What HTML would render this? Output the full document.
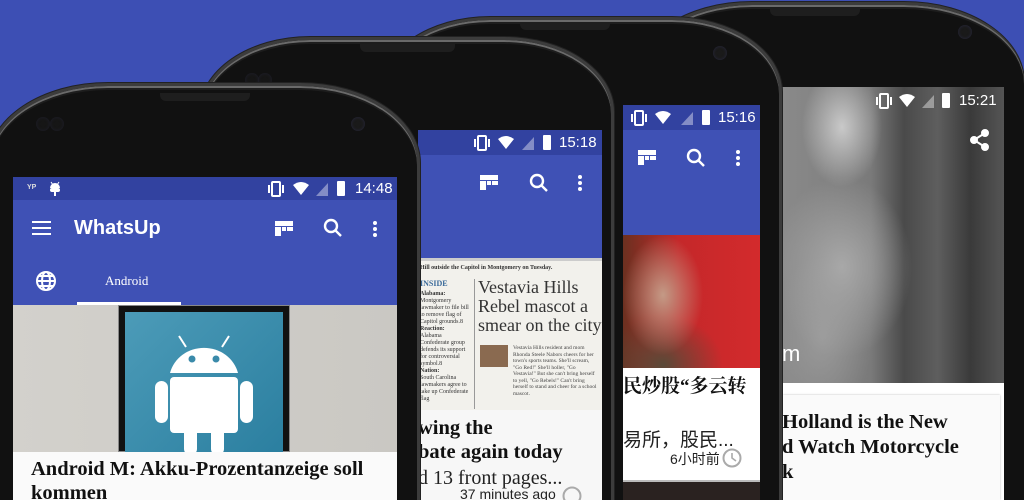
<!DOCTYPE html>
<html><head><meta charset="utf-8"><style>
*{margin:0;padding:0;box-sizing:border-box}
html,body{width:1024px;height:500px;overflow:hidden}
body{font-family:"Liberation Sans","Noto Sans CJK SC",sans-serif}
#root{position:relative;width:1024px;height:500px;overflow:hidden;background:#3d4fb4}
.g{position:absolute;left:0;top:0}
.a{position:absolute}
.body{position:absolute;background:#111;border:3px solid #3c3c3c;border-bottom:none;box-shadow:inset 0 2px 0 #6a6a6a,inset 0 4px 0 #1d1d1d,0 0 0 1px #222}
.grill{position:absolute;height:8px;background:#1e1e1e;border-radius:0 0 6px 6px}
.cam{position:absolute;width:14px;height:14px;border-radius:50%;background:#1a1a1a;box-shadow:inset 0 0 3px #2a2a40}
.scr{position:absolute;overflow:hidden}
.sb{position:absolute;left:0;right:0;background:#3242a0}
.tb{position:absolute;left:0;right:0;background:#3f51b5}
.t{position:absolute;white-space:nowrap;color:#fff}
.sf{font-family:"Liberation Serif","Noto Serif CJK SC",serif;color:#111;font-weight:bold;font-size:20.5px}
</style></head><body><div id="root">

<!-- PHONE 4 (back) -->
<div class="g">
 <div class="body" style="left:632px;top:2px;width:392px;height:498px;border-radius:120px 120px 0 0/80px 80px 0 0;border-right:none"></div>
 <div class="grill" style="left:770px;top:8px;width:90px"></div>
 <div class="cam" style="left:958px;top:25px"></div>
 <div class="scr" style="left:782px;top:87px;width:222px;height:413px;background:#fff">
  <div class="a" style="left:0;top:0;width:222px;height:296px;background:
   radial-gradient(ellipse 40px 60px at 60px 40px,#c9c9c9,transparent),
   radial-gradient(ellipse 70px 90px at 60px 180px,#a8a8a8,transparent),
   radial-gradient(ellipse 50px 80px at 40px 250px,#9a9a9a,transparent),
   linear-gradient(90deg,#8a8a8a 0,#7a7a7a 40%,#4a4a4a 55%,#5e5e5e 70%,#3a3a3a 85%,#555 100%)"></div>
  <div class="t" style="left:0;top:254px;font-size:22px">m</div>
  <svg class="a" style="left:94px;top:5px" width="120" height="20" viewBox="0 0 120 20" fill="#fff">
   <rect x="4" y="2" width="8" height="14" rx="1" fill="none" stroke="#fff" stroke-width="2"/><rect x="0" y="5" width="2" height="8"/><rect x="14" y="5" width="2" height="8"/>
   <path d="M23 5 Q31 -1 39 5 L31 15 Z"/>
   <path d="M46 16 L58 3 L58 16 Z" opacity=".4"/>
   <rect x="66" y="1" width="8" height="15" rx="1"/>
  </svg>
  <div class="t" style="left:177px;top:5px;font-size:15px">15:21</div>
  <svg class="a" style="left:188px;top:42px" width="20" height="22" viewBox="0 0 20 22" fill="#fff" stroke="#fff" stroke-width="2"><circle cx="15" cy="4" r="3"/><circle cx="4" cy="11" r="3"/><circle cx="15" cy="18" r="3"/><path d="M15 4 L4 11 L15 18" fill="none"/></svg>
  <div class="a" style="left:1px;top:308px;width:217px;height:105px;background:#fafafa;box-shadow:0 0 2px #bbb"></div>
  <div class="t sf" style="left:0;top:324px">Holland is the New</div>
  <div class="t sf" style="left:0;top:349px">d Watch Motorcycle</div>
  <div class="t sf" style="left:0;top:374px">k</div>
 </div>
</div>

<!-- PHONE 3 -->
<div class="g">
 <div class="body" style="left:380px;top:17px;width:402px;height:483px;border-radius:110px 110px 0 0/75px 75px 0 0"></div>
 <div class="grill" style="left:520px;top:22px;width:90px"></div>
 <div class="cam" style="left:713px;top:46px"></div>
 <div class="scr" style="left:623px;top:105px;width:137px;height:395px;background:#fff">
  <div class="sb" style="top:0;height:25px"></div>
  <div class="tb" style="top:25px;height:105px"></div>
  <svg class="a" style="left:8px;top:5px" width="80" height="16" viewBox="0 0 80 16" fill="#fff">
   <rect x="4" y="1" width="8" height="14" rx="1" fill="none" stroke="#fff" stroke-width="2"/><rect x="0" y="4" width="2" height="8"/><rect x="14" y="4" width="2" height="8"/>
   <path d="M24 4 Q32 -2 40 4 L32 14 Z"/>
   <path d="M50 15 L62 2 L62 15 Z" opacity=".4"/>
   <rect x="71" y="0" width="8" height="15" rx="1"/>
  </svg>
  <div class="t" style="left:95px;top:4px;font-size:15px">15:16</div>
  <svg class="a" style="left:15px;top:45px" width="18" height="15" viewBox="0 0 18 15" fill="#fff"><rect x="0" y="0" width="18" height="5"/><rect x="0" y="6" width="6" height="9"/><rect x="7" y="6" width="4" height="4"/><rect x="12" y="6" width="6" height="4"/></svg>
  <svg class="a" style="left:63px;top:43px" width="20" height="20" viewBox="0 0 20 20" fill="none" stroke="#fff" stroke-width="2.4"><circle cx="8" cy="8" r="6"/><path d="M12 12 L18 18"/></svg>
  <svg class="a" style="left:112px;top:44px" width="6" height="18" fill="#fff"><circle cx="3" cy="3" r="2"/><circle cx="3" cy="9" r="2"/><circle cx="3" cy="15" r="2"/></svg>
  <div class="a" style="left:0;top:130px;width:137px;height:133px;background:
   radial-gradient(ellipse 40px 60px at 40px 60px,#c49a86,transparent),
   radial-gradient(ellipse 60px 50px at 40px 130px,#5a4a38,transparent),
   linear-gradient(90deg,#6b3020 0,#c4282a 40%,#d32a2c 100%)"></div>
  <div class="t sf" style="left:0;top:266px;font-size:19px">民炒股“多云转</div>
  <div class="t" style="left:0;top:320px;font-size:19px;color:#222">易所，股民...</div>
  <div class="t" style="left:47px;top:344px;font-size:14px;color:#222">6小时前</div>
  <svg class="a" style="left:99px;top:343px" width="20" height="20"><circle cx="10" cy="10" r="8.5" fill="none" stroke="#aaa" stroke-width="2"/><path d="M10 5 V10 L14 13" fill="none" stroke="#aaa" stroke-width="1.6"/></svg>
  <div class="a" style="left:0;top:375px;width:137px;height:20px;background:#2a2220;border-top:2px solid #bbb"></div>
 </div>
</div>

<!-- PHONE 2 -->
<div class="g">
 <div class="body" style="left:200px;top:37px;width:414px;height:463px;border-radius:110px 110px 0 0/75px 75px 0 0"></div>
 <div class="grill" style="left:360px;top:44px;width:95px"></div>
 <div class="cam" style="left:245px;top:73px;opacity:.6"></div><div class="cam" style="left:258px;top:73px;opacity:.6"></div>
 <div class="scr" style="left:418px;top:130px;width:184px;height:370px;background:#f7f7f7">
  <div class="sb" style="top:0;height:25px"></div>
  <div class="tb" style="top:25px;height:103px"></div>
  <svg class="a" style="left:56px;top:5px" width="80" height="16" viewBox="0 0 80 16" fill="#fff">
   <rect x="4" y="1" width="8" height="14" rx="1" fill="none" stroke="#fff" stroke-width="2"/><rect x="0" y="4" width="2" height="8"/><rect x="14" y="4" width="2" height="8"/>
   <path d="M24 4 Q32 -2 40 4 L32 14 Z"/>
   <path d="M48 15 L60 2 L60 15 Z" opacity=".4"/>
   <rect x="69" y="0" width="8" height="15" rx="1"/>
  </svg>
  <div class="t" style="left:141px;top:4px;font-size:15px">15:18</div>
  <svg class="a" style="left:62px;top:45px" width="18" height="15" viewBox="0 0 18 15" fill="#fff"><rect x="0" y="0" width="18" height="5"/><rect x="0" y="6" width="6" height="9"/><rect x="7" y="6" width="4" height="4"/><rect x="12" y="6" width="6" height="4"/></svg>
  <svg class="a" style="left:111px;top:43px" width="20" height="20" viewBox="0 0 20 20" fill="none" stroke="#fff" stroke-width="2.4"><circle cx="8" cy="8" r="6"/><path d="M12 12 L18 18"/></svg>
  <svg class="a" style="left:159px;top:44px" width="6" height="18" fill="#fff"><circle cx="3" cy="3" r="2"/><circle cx="3" cy="9" r="2"/><circle cx="3" cy="15" r="2"/></svg>
  <div class="a" style="left:0;top:128px;width:184px;height:152px;background:#f2f1ec;border-top:3px solid #ccc;font-family:'Liberation Serif',serif;color:#222;overflow:hidden">
   <div class="t" style="left:2px;top:4px;font-size:6px;color:#333;font-weight:bold">Hill outside the Capitol in Montgomery on Tuesday.</div>
   <div class="t" style="left:2px;top:18px;font-size:8px;color:#3a6a9a;font-weight:bold">INSIDE</div>
   <div class="a" style="left:2px;top:30px;width:50px;font-size:6px;line-height:7px;color:#333"><b>Alabama:</b><br>Montgomery lawmaker to file bill to remove flag of Capitol grounds.8<br><b>Reaction:</b><br>Alabama Confederate group defends its support for controversial symbol.8<br><b>Nation:</b><br>South Carolina lawmakers agree to take up Confederate flag</div>
   <div class="a" style="left:56px;top:18px;width:1px;height:130px;background:#999"></div>
   <div class="a" style="left:60px;top:17px;font-size:18px;line-height:19px;color:#333;white-space:nowrap">Vestavia Hills<br>Rebel mascot a<br>smear on the city</div>
   <div class="a" style="left:62px;top:84px;width:28px;height:22px;background:#8a6a50"></div>
   <div class="a" style="left:95px;top:84px;width:85px;font-size:5.5px;line-height:6.5px;color:#444">Vestavia Hills resident and mom Rhonda Steele Nabors cheers for her town's sports teams. She'll scream, "Go Red!" She'll holler, "Go Vestavia!" But she can't bring herself to yell, "Go Rebels!" Can't bring herself to stand and cheer for a school mascot.</div>
  </div>
  <div class="t sf" style="left:0;top:287px">wing the</div>
  <div class="t sf" style="left:0;top:311px">bate again today</div>
  <div class="t" style="left:0;top:337px;font-size:20px;color:#222;font-family:'Liberation Serif',serif">d 13 front pages...</div>
  <div class="t" style="left:42px;top:356px;font-size:14px;color:#222">37 minutes ago</div>
  <svg class="a" style="left:144px;top:356px" width="20" height="14"><circle cx="10" cy="10" r="8.5" fill="none" stroke="#aaa" stroke-width="2"/></svg>
 </div>
</div>

<!-- PHONE 1 (front) -->
<div class="g">
 <div class="body" style="left:-12px;top:83px;width:432px;height:417px;border-radius:120px 120px 0 0/80px 80px 0 0"></div>
 <div class="grill" style="left:160px;top:93px;width:90px"></div>
 <div class="cam" style="left:36px;top:117px;opacity:.6"></div><div class="cam" style="left:50px;top:117px;opacity:.6"></div>
 <div class="cam" style="left:351px;top:117px"></div>
 <div class="scr" style="left:13px;top:177px;width:384px;height:323px;background:#fafafa">
  <div class="sb" style="top:0;height:23px"></div>
  <div class="tb" style="top:23px;height:105px"></div>
  <div class="t" style="left:14px;top:7px;font-size:7px;font-weight:bold;color:#ddd">YP</div>
  <svg class="a" style="left:35px;top:3px" width="14" height="16" viewBox="0 0 14 16" fill="#fff"><path d="M2 8 A5 5 0 0 1 12 8 Z"/><rect x="2" y="8" width="10" height="4" rx="2"/><rect x="6" y="11" width="2" height="5"/><path d="M3 2 L5 5 M11 2 L9 5" stroke="#fff"/></svg>
  <svg class="a" style="left:255px;top:4px" width="80" height="16" viewBox="0 0 80 16" fill="#fff">
   <rect x="4" y="1" width="8" height="14" rx="1" fill="none" stroke="#fff" stroke-width="2"/><rect x="0" y="4" width="2" height="8"/><rect x="14" y="4" width="2" height="8"/>
   <path d="M25 4 Q33 -2 41 4 L33 14 Z"/>
   <path d="M48 15 L60 2 L60 15 Z" opacity=".4"/>
   <rect x="69" y="0" width="8" height="15" rx="1"/>
  </svg>
  <div class="t" style="left:342px;top:3px;font-size:15px">14:48</div>
  <svg class="a" style="left:19px;top:44px" width="19" height="14" fill="#fff"><rect y="0" width="19" height="2"/><rect y="6" width="19" height="2"/><rect y="12" width="19" height="2"/></svg>
  <div class="t" style="left:61px;top:40px;font-size:20px;font-weight:bold">WhatsUp</div>
  <svg class="a" style="left:262px;top:44px" width="18" height="15" viewBox="0 0 18 15" fill="#fff"><rect x="0" y="0" width="18" height="5"/><rect x="0" y="6" width="6" height="9"/><rect x="7" y="6" width="4" height="4"/><rect x="12" y="6" width="6" height="4"/></svg>
  <svg class="a" style="left:310px;top:41px" width="20" height="20" viewBox="0 0 20 20" fill="none" stroke="#fff" stroke-width="2.4"><circle cx="8" cy="8" r="6"/><path d="M12 12 L18 18"/></svg>
  <svg class="a" style="left:359px;top:43px" width="6" height="18" fill="#fff"><circle cx="3" cy="3" r="2"/><circle cx="3" cy="9" r="2"/><circle cx="3" cy="15" r="2"/></svg>
  <svg class="a" style="left:22px;top:93px" width="22" height="22" viewBox="0 0 22 22" fill="none" stroke="#fff" stroke-width="2"><circle cx="11" cy="11" r="9"/><ellipse cx="11" cy="11" rx="4" ry="9"/><path d="M2 11 H20 M4 6 H18 M4 16 H18"/></svg>
  <div class="t" style="left:92px;top:96px;font-size:13px;font-family:'Liberation Serif',serif">Android</div>
  <div class="a" style="left:64px;top:125px;width:104px;height:3px;background:#fff"></div>
  <div class="a" style="left:0;top:128px;width:384px;height:147px;background:linear-gradient(90deg,#d3d1cc,#cac8c3);overflow:hidden">
   <div class="a" style="left:105px;top:0;width:172px;height:147px;background:#111;border:1px solid #888"></div>
   <div class="a" style="left:112px;top:7px;width:158px;height:140px;background:linear-gradient(135deg,#4c9bb8,#2b7fa0)"></div>
   <svg class="a" style="left:140px;top:20px" width="110" height="127" viewBox="0 0 110 127" fill="#fff">
    <path d="M17 48 A35 33 0 0 1 85 48 Z"/>
    <path d="M33 22 L26 11 M69 22 L76 11" stroke="#fff" stroke-width="2"/>
    <circle cx="39" cy="34" r="3.5" fill="#3a8aaa"/><circle cx="63" cy="34" r="3.5" fill="#3a8aaa"/>
    <rect x="17" y="52" width="68" height="56" rx="4"/>
    <rect x="2" y="56" width="13" height="42" rx="6.5"/><rect x="87" y="56" width="13" height="42" rx="6.5"/>
    <rect x="31" y="100" width="13" height="30" rx="6"/><rect x="58" y="100" width="13" height="30" rx="6"/>
   </svg>
  </div>
  <div class="t sf" style="left:18px;top:281px">Android M: Akku-Prozentanzeige soll</div>
  <div class="t sf" style="left:18px;top:305px;height:18px;overflow:hidden">kommen</div>
 </div>
</div>

</div></body></html>
